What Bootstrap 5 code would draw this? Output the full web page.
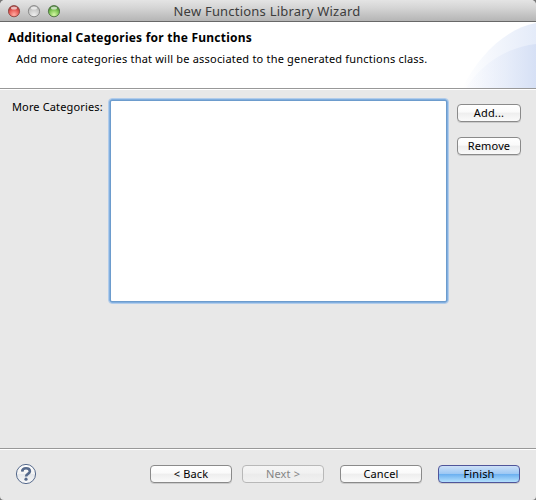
<!DOCTYPE html>
<html lang="en">
<head>
<meta charset="utf-8">
<meta name="viewport" content="width=device-width, initial-scale=1">
<title>New Functions Library Wizard</title>
<link href="https://cdn.jsdelivr.net/npm/bootstrap@5.3.0/dist/css/bootstrap.min.css" rel="stylesheet">
<style>
  body { font-family: "Noto Sans", "Open Sans", sans-serif; font-size: 11px; line-height: 14px; color: #000; background: #777; }
  .wizard { width: 536px; height: 500px; background: #e8e8e8; border-radius: 5px 5px 4px 4px; }
  .titlebar { height: 22px; background: linear-gradient(#e4e4e4 0, #d6d6d6 35%, #b5b5b5 100%); border-bottom: 1px solid #686868; padding: 0 62px 0 8px; }
  .window-title { font-size: 13px; line-height: 21px; color: #3c3c3c; letter-spacing: .21px; padding-top: 1px; }
  .lights { width: 52px; height: 14px; }
  .banner { height: 67px; background: #fff; border-bottom: 1px solid #989898; padding-left: 8px; }
  .banner-text { padding-top: 8px; }
  .banner h1 { font-size: 12px; line-height: 16px; letter-spacing: .23px; }
  .banner p { padding: 6px 0 0 8px; letter-spacing: .2px; }
  .swoosh { width: 80px; height: 66px; }
  .content-area { height: 359px; border-top: 1px solid #fff; padding: 9px 15px 0 12px; }
  .field-label { width: 96px; padding-top: 1px; letter-spacing: .14px; }
  .category-list { width: 335px; height: 200px; background: #fff; margin: 2px 0 0 3px; box-shadow: 0 0 0 1px #6d9ccd, 0 0 0 2px #82afdf; outline: 1px solid #b1cceb; outline-offset: 2px; border-radius: 1px; }
  .side { width: 64px; padding-top: 5px; gap: 15px; }
  .btn.mac { height: 18px; padding: 0; border: 1px solid #8a8a8a; border-radius: 4px; font-size: 11px; line-height: 16px; color: #000; letter-spacing: .15px;
    background: linear-gradient(#fff 0, #fafafa 45%, #eee 50%, #fafafa 100%); box-shadow: 0 1px 0 rgba(0,0,0,.12); }
  .btn.mac:disabled { color: #858585; border-color: #b8b8b8; background: linear-gradient(#f5f5f5 0, #f1f1f1 45%, #ebebeb 50%, #f1f1f1 100%); opacity: 1; box-shadow: none; }
  .btn.mac.default { border-color: #50559a; background: linear-gradient(#cde0f7 0, #9dc8f4 48%, #6cb0f0 52%, #b4e0fd 100%); }
  .actions { height: 52px; border-top: 1px solid #989898; box-shadow: inset 0 1px 0 #fff; padding: 15px 16px 0 15px; }
  .actions .btn.mac { width: 82px; margin-top: 1px; }
  .paging { gap: 10px; }
</style>
</head>
<body class="overflow-hidden">
<main class="wizard overflow-hidden">
  <header class="titlebar d-flex align-items-center">
    <svg class="lights flex-shrink-0" viewBox="0 0 52 14" aria-hidden="true">
      <defs>
        <radialGradient id="red" cx=".5" cy=".8" r=".75"><stop offset="0" stop-color="#ffaca2"/><stop offset=".55" stop-color="#e9605a"/><stop offset="1" stop-color="#a42b2b"/></radialGradient>
        <radialGradient id="gray" cx=".5" cy=".85" r=".85"><stop offset="0" stop-color="#eee"/><stop offset=".6" stop-color="#cacaca"/><stop offset="1" stop-color="#aaa"/></radialGradient>
        <radialGradient id="green" cx=".5" cy=".8" r=".75"><stop offset="0" stop-color="#d5f7a5"/><stop offset=".55" stop-color="#83c858"/><stop offset="1" stop-color="#3e7c2d"/></radialGradient>
      </defs>
      <circle cx="6" cy="7.2" r="5.6" fill="url(#red)" stroke="#8c4743" stroke-width=".9"/>
      <circle cx="26" cy="7.2" r="5.6" fill="url(#gray)" stroke="#858585" stroke-width=".9"/>
      <circle cx="46" cy="7.2" r="5.6" fill="url(#green)" stroke="#4d7142" stroke-width=".9"/>
      <g fill="#fff" opacity=".65"><ellipse cx="6" cy="4" rx="3" ry="1.5"/><ellipse cx="26" cy="4" rx="3" ry="1.5"/><ellipse cx="46" cy="4" rx="3" ry="1.5"/></g>
    </svg>
    <div class="window-title flex-grow-1 text-center">New Functions Library Wizard</div>
  </header>

  <section class="banner d-flex justify-content-between align-items-start">
    <div class="banner-text text-nowrap">
      <h1 class="fw-bold m-0">Additional Categories for the Functions</h1>
      <p class="m-0">Add more categories that will be associated to the generated functions class.</p>
    </div>
    <svg class="swoosh flex-shrink-0" viewBox="36 0 80 66" aria-hidden="true">
      <defs>
        <linearGradient id="outer"><stop offset="0" stop-color="#fff"/><stop offset="1" stop-color="#e4ebf9"/></linearGradient>
        <linearGradient id="inner"><stop offset="0" stop-color="#f3f6fd" stop-opacity=".2"/><stop offset="1" stop-color="#d6e0f5"/></linearGradient>
      </defs>
      <path d="M42 66C58 35 84 7 116 1V66Z" fill="url(#outer)"/>
      <path d="M46 66C62 41 88 25 116 22V66Z" fill="url(#inner)"/>
    </svg>
  </section>

  <section class="content-area d-flex align-items-start">
    <label class="field-label text-nowrap" for="categories">More Categories:</label>
    <div id="categories" class="category-list" role="listbox" tabindex="0"></div>
    <div class="side d-flex flex-column ms-auto">
      <button type="button" class="btn mac">Add...</button>
      <button type="button" class="btn mac">Remove</button>
    </div>
  </section>

  <footer class="actions d-flex align-items-start">
    <svg width="22" height="22" viewBox="0 0 22 22" role="img" aria-label="Help">
      <defs><linearGradient id="help" x2="0" y2="1"><stop offset="0" stop-color="#fff"/><stop offset=".5" stop-color="#f2f2f2"/><stop offset=".52" stop-color="#e3e6ea"/><stop offset="1" stop-color="#fafafa"/></linearGradient></defs>
      <circle cx="11" cy="10" r="9.6" fill="url(#help)" stroke="#566a8c" stroke-width="1"/>
      <path d="M7.2 7.6C7.3 5.2 8.8 4.3 11 4.3s3.9 1 3.9 3c0 2.7-3.8 2.5-3.8 5.1" fill="none" stroke="#566a8c" stroke-width="2.6"/>
      <circle cx="11" cy="15.2" r="1.6" fill="#566a8c"/>
    </svg>
    <div class="d-flex ms-auto">
      <div class="paging d-flex">
        <button type="button" class="btn mac">&lt; Back</button>
        <button type="button" class="btn mac" disabled>Next &gt;</button>
      </div>
      <button type="button" class="btn mac ms-3">Cancel</button>
      <button type="button" class="btn mac default ms-3">Finish</button>
    </div>
  </footer>
</main>
<script src="https://cdn.jsdelivr.net/npm/bootstrap@5.3.0/dist/js/bootstrap.bundle.min.js"></script>
</body>
</html>
